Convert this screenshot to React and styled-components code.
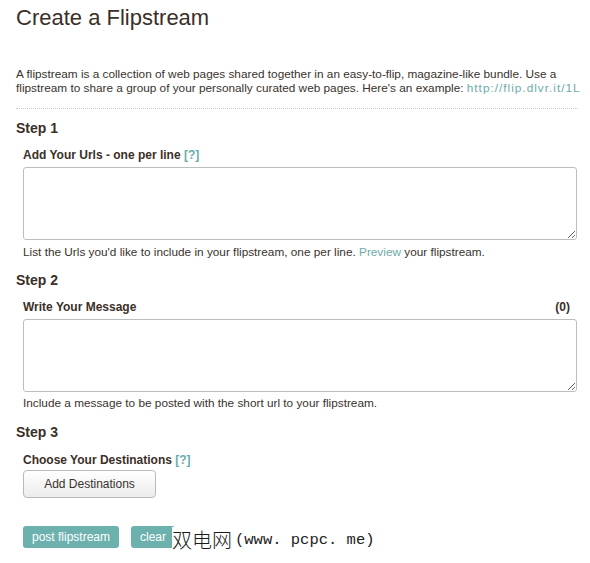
import React from "react";
import styled, { createGlobalStyle } from "styled-components";

const Global = createGlobalStyle`
  html, body { margin: 0; padding: 0; background: #fff; }
  body { font-family: "Liberation Sans", Arial, sans-serif; color: #3a322c; }
`;

const Page = styled.div`
  position: relative;
  width: 590px;
  height: 563px;
  padding: 0 2px 0 16px;
  box-sizing: border-box;
  overflow: hidden;
`;

const Title = styled.h1`
  margin: 5px 0 0;
  font-size: 22px;
  line-height: 26px;
  font-weight: normal;
  color: #3b2f27;
`;

const Intro = styled.p`
  margin: 36px 0 0;
  width: 562px;
  font-size: 11.8px;
  line-height: 14px;
  padding-bottom: 13px;
  border-bottom: 1px dotted #c8c8c8;
`;

const IntroLine = styled.span`
  display: block;
  white-space: nowrap;
`;

const Link = styled.a`
  color: #6aaba9;
  text-decoration: none;
  white-space: nowrap;
  letter-spacing: ${(p) => p.$spread || 0}px;
`;

const Step = styled.section`
  margin-top: ${(p) => p.$top}px;
`;

const StepTitle = styled.h2`
  margin: 0;
  font-size: 14px;
  line-height: 17px;
  font-weight: bold;
  color: #3b2f27;
`;

const Field = styled.div`
  width: 554px;
  margin-left: 7px;
  margin-top: ${(p) => p.$top || 11}px;
`;

const LabelRow = styled.div`
  display: flex;
  justify-content: space-between;
  font-size: 12px;
  line-height: 15px;
  font-weight: bold;
  color: #3b2f27;
  padding-right: 7px;
`;

const Help = styled.span`
  color: #6aaba9;
  font-weight: bold;
`;

const Area = styled.textarea`
  display: block;
  box-sizing: border-box;
  width: 554px;
  height: 73px;
  margin-top: ${(p) => p.$top || 4}px;
  border: 1px solid #bdbdbd;
  border-radius: 3px;
  background: #fff;
  font-family: inherit;
  font-size: 12px;
  resize: both;
`;

const Note = styled.p`
  margin: ${(p) => p.$top || 2}px 0 0;
  font-size: 11.8px;
  line-height: 15px;
  white-space: nowrap;
`;

const GrayButton = styled.button`
  display: block;
  box-sizing: border-box;
  margin-top: ${(p) => p.$top || 4}px;
  width: 133px;
  height: 28px;
  border: 1px solid #b9b9b9;
  border-radius: 4px;
  background: linear-gradient(#ffffff, #ececec);
  font-family: "Liberation Sans", Arial, sans-serif;
  font-size: 12px;
  color: #3a322c;
  cursor: pointer;
`;

const Actions = styled.div`
  display: flex;
  gap: 12px;
  margin-top: 28px;
  padding-left: 7px;
`;

const TealButton = styled.button`
  box-sizing: border-box;
  height: 22px;
  padding: 0 9px;
  border: none;
  border-radius: 3px;
  background: #6cb1ae;
  color: #fff;
  font-family: "Liberation Sans", Arial, sans-serif;
  font-size: 12px;
  cursor: pointer;
`;

const Watermark = styled.div`
  position: absolute;
  left: 172px;
  top: 527px;
  height: 26px;
  padding-right: 4px;
  display: flex;
  align-items: center;
  background: #fff;
  color: #1a1a1a;
  white-space: nowrap;
`;

const WmHan = styled.span`
  font-family: "Noto Sans CJK SC", sans-serif;
  font-weight: 300;
  font-size: 20px;
  line-height: 26px;
`;

const WmLatin = styled.span`
  font-family: "Liberation Mono", monospace;
  font-size: 15.5px;
  line-height: 26px;
  margin-left: 3px;
  color: #222;
`;

export default function App() {
  return (
    <>
      <Global />
      <Page>
        <Title>Create a Flipstream</Title>
        <Intro>
          <IntroLine>
            A flipstream is a collection of web pages shared together in an easy-to-flip, magazine-like bundle. Use a
          </IntroLine>
          <IntroLine>
            flipstream to share a group of your personally curated web pages. Here's an example:{" "}
            <Link href="#" $spread={1}>
              http://flip.dlvr.it/1L
            </Link>
          </IntroLine>
        </Intro>

        <Step $top={11}>
          <StepTitle>Step 1</StepTitle>
          <Field>
            <LabelRow>
              <span>
                Add Your Urls - one per line <Help>[?]</Help>
              </span>
            </LabelRow>
            <Area />
            <Note $top={5}>
              List the Urls you'd like to include in your flipstream, one per line. <Link href="#">Preview</Link> your
              flipstream.
            </Note>
          </Field>
        </Step>

        <Step $top={12}>
          <StepTitle>Step 2</StepTitle>
          <Field $top={11}>
            <LabelRow>
              <span>Write Your Message</span>
              <span>(0)</span>
            </LabelRow>
            <Area $top={4} />
            <Note $top={4}>Include a message to be posted with the short url to your flipstream.</Note>
          </Field>
        </Step>

        <Step $top={13}>
          <StepTitle>Step 3</StepTitle>
          <Field $top={12}>
            <LabelRow>
              <span>
                Choose Your Destinations <Help>[?]</Help>
              </span>
            </LabelRow>
            <GrayButton $top={2}>Add Destinations</GrayButton>
          </Field>
        </Step>

        <Actions>
          <TealButton>post flipstream</TealButton>
          <TealButton>clear</TealButton>
        </Actions>

        <Watermark>
          <WmHan>双电网</WmHan>
          <WmLatin>(www. pcpc. me)</WmLatin>
        </Watermark>
      </Page>
    </>
  );
}
